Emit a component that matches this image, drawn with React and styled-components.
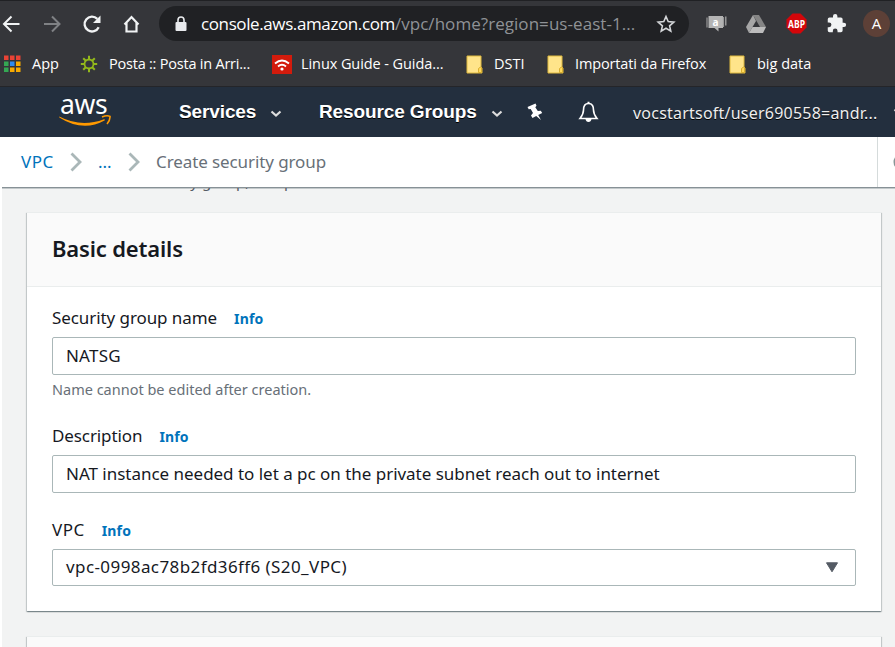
import React from "react";
import styled, { createGlobalStyle } from "styled-components";

const Global = createGlobalStyle`
  * { box-sizing: border-box; }
  body { margin: 0; background: #fff; overflow: hidden; }
`;

const ui = `"Open Sans", "Noto Sans", sans-serif`;
const ember = `"Noto Sans", "Open Sans", sans-serif`;

const Page = styled.div`
  width: 895px;
  height: 647px;
  overflow: hidden;
  display: flex;
  flex-direction: column;
  font-family: ${ember};
  color: #16191f;
`;

const Text = styled.span`
  font-size: ${(p) => p.$size || 17}px;
  letter-spacing: ${(p) => p.$track || 0}px;
  white-space: pre;
`;

const Chrome = styled.header`
  flex: none;
  height: 87px;
  background: #35363a;
  border-top: 1px solid #202124;
  border-bottom: 1px solid #242529;
  font-family: ${ui};
  color: #fff;
`;

const Toolbar = styled.div`
  height: 45px;
  display: flex;
  align-items: center;
`;

const NavIcons = styled.div`
  width: 159px;
  display: flex;
  gap: 16px;
  align-items: center;
  svg { flex: none; display: block; }
`;

const Omnibox = styled.div`
  width: 530px;
  height: 35px;
  border-radius: 18px;
  background: #202124;
  display: flex;
  align-items: center;
  padding: 0 13px 0 16px;
  svg { flex: none; }
`;

const Url = styled.div`
  flex: 1;
  margin-left: 14px;
  line-height: 24px;
  white-space: nowrap;
`;

const UrlPath = styled(Text)`
  color: #8f9296;
`;

const Extensions = styled.div`
  flex: 1;
  display: flex;
  align-items: center;
  padding-left: 16px;
  svg { flex: none; }
`;

const ExtSlot = styled.div`
  width: ${(p) => p.$w || 40}px;
  flex: none;
  display: flex;
`;

const Avatar = styled.div`
  flex: none;
  width: 27px;
  height: 27px;
  border-radius: 50%;
  background: #5d4037;
  font-size: 15px;
  line-height: 27px;
  text-align: center;
`;

const Bookmarks = styled.div`
  height: 36px;
  display: flex;
  align-items: center;
  padding-left: 3px;
`;

const Bookmark = styled.div`
  width: ${(p) => p.$w}px;
  flex: none;
  display: flex;
  align-items: center;
  line-height: 20px;
  svg { flex: none; margin-right: ${(p) => p.$gap}px; }
`;

const ConsoleNav = styled.nav`
  flex: none;
  height: 50px;
  background: #232f3e;
  display: flex;
  align-items: center;
  color: #fff;
  text-shadow: 0 1px 0 #000;
  svg { flex: none; }
`;

const AwsLogo = styled.div`
  flex: none;
  width: 179px;
  height: 50px;
  padding: 2px 0 0 59px;
  display: flex;
  flex-direction: column;
  text-shadow: none;
  svg { margin-top: -4px; }
`;

const LogoWord = styled.span`
  font-size: 26.5px;
  line-height: 30px;
  letter-spacing: -0.3px;
  padding-left: 1px;
`;

const NavItem = styled.div`
  width: ${(p) => p.$w}px;
  flex: none;
  display: flex;
  align-items: center;
  font: bold 19px/24px "Liberation Sans", sans-serif;
  letter-spacing: -0.12px;
  svg { margin: 3px 0 0 14px; }
`;

const Slot = styled.div`
  width: ${(p) => p.$w}px;
  flex: none;
  display: flex;
`;

const Account = styled.div`
  flex: none;
  width: 260px;
  padding-top: 1px;
  color: #eee;
  line-height: 22px;
`;

const CrumbBar = styled.div`
  flex: none;
  height: 50px;
  background: #fff;
  display: flex;
  align-items: center;
`;

const Crumbs = styled.div`
  width: 877px;
  flex: none;
  padding-left: 21px;
  display: flex;
  align-items: center;
  line-height: 24px;
  color: #687078;
  svg { flex: none; }
`;

const CrumbLink = styled(Text)`
  color: #0073bb;
`;

const HelpEdge = styled.div`
  flex: 1;
  height: 50px;
  border-left: 1px solid #d5dbdb;
  overflow: hidden;
  padding: 16px 0 0 15px;
  svg { display: block; }
`;

const Content = styled.main`
  flex: 1;
  min-height: 0;
  margin-left: 2px;
  padding: 0 14px 0 25px;
  background: #f2f3f3;
  border-top: 1px solid #879196;
  box-shadow: inset 0 1px 0 #c3c9cb;
  overflow: hidden;
`;

const Intro = styled.p`
  height: 24px;
  margin: 0;
  overflow: hidden;
  color: #545b64;
`;

const IntroLine = styled(Text)`
  display: block;
  margin-top: -19px;
  line-height: 24px;
`;

const Panel = styled.section`
  background: #fff;
  height: 399px;
  margin-bottom: 25px;
  border-top: 1px solid #eaeded;
  box-shadow: 0 1px 1px 0 rgba(0, 28, 36, 0.3), 1px 1px 1px 0 rgba(0, 28, 36, 0.15),
    -1px 1px 1px 0 rgba(0, 28, 36, 0.15);
`;

const PanelHeader = styled.div`
  height: 74px;
  background: #fafafa;
  border-bottom: 1px solid #eaeded;
  padding: 0 25px;
`;

const Title = styled.h2`
  margin: 0;
  font-size: 22px;
  font-weight: 600;
  line-height: 70px;
  letter-spacing: -0.16px;
`;

const PanelBody = styled.div`
  padding: 18px 25px 0;
`;

const Field = styled.div`
  height: ${(p) => p.$h}px;
`;

const LabelRow = styled.div`
  height: 32px;
  display: flex;
  align-items: baseline;
  gap: 17px;
  line-height: 26px;
`;

const Info = styled.a`
  font-size: 14px;
  font-weight: 700;
  letter-spacing: 0.15px;
  color: #0073bb;
`;

const Input = styled.div`
  height: ${(p) => p.$h || 38}px;
  border: 1px solid #aab7b8;
  border-radius: 2px;
  padding: 0 16px 0 13px;
  display: flex;
  align-items: center;
  justify-content: space-between;
  span { margin-bottom: 2px; }
`;

const Hint = styled.div`
  color: #687078;
  line-height: 28px;
`;

const Folder = () => (
  <svg width="17" height="19" viewBox="0 0 17 19">
    <path d="M1 1h14v11l1 1v5H1z" fill="#ffe48a" stroke="#dfb93f" />
    <path d="M12.5 17.5v-4l2-1.500 1 1v4.500z" fill="#ffd95c" stroke="#d9ae2f" />
  </svg>
);

const Caret = () => (
  <svg width="12" height="8" viewBox="0 0 12 8">
    <path d="M1.500 1.500 6 5.500l4.500-4" fill="none" stroke="#ddd" strokeWidth="2.200" />
  </svg>
);

const Chevron = () => (
  <svg width="12" height="20" viewBox="0 0 12 20">
    <path d="M1.500 1.500 10 10l-8.500 8.500" fill="none" stroke="#aab7b8" strokeWidth="2.800" />
  </svg>
);

const dots = ["#ea4335", "#ea4335", "#ea4335", "#34a853", "#2f8cf0", "#f9ab00", "#34a853", "#f9ab00", "#f9ab00"];

export default function App() {
  return (
    <Page>
      <Global />
      <Chrome>
        <Toolbar>
          <NavIcons>
            <svg width="24" height="24" viewBox="0 0 24 24" fill="none" stroke="#f1f3f4" strokeWidth="2">
              <path d="M19.500 12H4.500M11.500 4.500 4 12l7.500 7.500" />
            </svg>
            <svg width="24" height="24" viewBox="0 0 24 24" fill="none" stroke="#7f8184" strokeWidth="2">
              <path d="M4 12h15M12 4.500l7.500 7.500-7.500 7.500" />
            </svg>
            <svg width="24" height="24" viewBox="0 0 24 24">
              <path d="M18.700 15.200A7.400 7.400 0 1 1 17.300 6.900" fill="none" stroke="#f1f3f4" strokeWidth="2.300" />
              <path d="M20.500 3.500v7.500H13z" fill="#f1f3f4" />
            </svg>
            <svg width="24" height="24" viewBox="0 0 24 24" fill="none" stroke="#f1f3f4" strokeWidth="2.200">
              <path d="M6.500 11v8.500h10V11M4.500 12.500l7-7.500 7 7.500" />
            </svg>
          </NavIcons>
          <Omnibox>
            <svg width="12" height="16" viewBox="0 0 12 16">
              <rect x="0.500" y="6" width="11" height="9" rx="1" fill="#e8eaed" />
              <path d="M3 6V4a3 3 0 0 1 6 0v2" fill="none" stroke="#e8eaed" strokeWidth="1.600" />
            </svg>
            <Url>
              <Text $size={17} $track={-0.39}>console.aws.amazon.com</Text>
              <UrlPath $size={17} $track={0.05}>/vpc/home?region=us-east-1...</UrlPath>
            </Url>
            <svg width="20" height="20" viewBox="0 0 20 20">
              <path d="m10 2.500 2.200 5.100 5.600.5-4.200 3.700 1.200 5.400-4.800-2.900-4.800 2.900 1.200-5.400-4.200-3.700 5.600-.5z" fill="none" stroke="#d4d6d9" strokeWidth="1.600" />
            </svg>
          </Omnibox>
          <Extensions>
            <ExtSlot $w={41}>
              <svg width="23" height="18" viewBox="0 0 23 18">
                <path d="M3.500 1H18v12h-4.500v3.500L9.500 13h-6z" fill="#b4b4b4" />
                <path d="M2 2.500v10M18.500 2v10" stroke="#999" strokeWidth="1.200" />
                <path d="M20.800 1.500v9" stroke="#b0b0b0" strokeWidth="1.200" />
                <text x="7.500" y="10.500" fontFamily="Open Sans, sans-serif" fontWeight="700" fontSize="10" fill="#fff">a</text>
              </svg>
            </ExtSlot>
            <ExtSlot $w={40}>
              <svg width="20" height="18" viewBox="0 0 20 18">
                <path d="M7 0h6l7 12h-6z" fill="#858585" />
                <path d="M7 0 0 12l3 6 7-12z" fill="#a6a6a6" />
                <path d="M6.500 12H20l-3 6H3z" fill="#bcbcbc" />
              </svg>
            </ExtSlot>
            <ExtSlot $w={40}>
              <svg width="21" height="21" viewBox="0 0 21 21">
                <path d="M6.500.5h8l6 6v8l-6 6h-8l-6-6v-8z" fill="#d4060a" />
                <text x="2" y="14.500" textLength="17" lengthAdjust="spacingAndGlyphs" fontFamily="Open Sans, sans-serif" fontWeight="700" fontSize="11" fill="#fff">ABP</text>
              </svg>
            </ExtSlot>
            <ExtSlot $w={37}>
              <svg width="21" height="21" viewBox="0 0 24 24" fill="#f1f3f4">
                <path d="M20.500 11H19V7a2 2 0 0 0-2-2h-4V3.500a2.500 2.500 0 0 0-5 0V5H4a2 2 0 0 0-2 2v3.800h1.500a2.700 2.700 0 0 1 0 5.400H2V20a2 2 0 0 0 2 2h3.800v-1.500a2.700 2.700 0 0 1 5.400 0V22H17a2 2 0 0 0 2-2v-4h1.500a2.500 2.500 0 0 0 0-5" />
              </svg>
            </ExtSlot>
            <Avatar>A</Avatar>
          </Extensions>
        </Toolbar>
        <Bookmarks>
          <Bookmark $w={77} $gap={11}>
            <svg width="18" height="18" viewBox="0 0 18 18">
              {dots.map((c, i) => (
                <rect key={i} x={1 + (i % 3) * 6} y={Math.floor(i / 3) * 6 + 0.5} width="4.500" height="4.500" fill={c} />
              ))}
            </svg>
            <Text $size={14.5}>App</Text>
          </Bookmark>
          <Bookmark $w={192} $gap={11}>
            <svg width="18" height="18" viewBox="0 0 18 18">
              <circle cx="9" cy="9" r="4.500" fill="none" stroke="#93b81b" strokeWidth="1.800" />
              <g stroke="#93b81b" strokeWidth="2">
                {[0, 45, 90, 135, 180, 225, 270, 315].map((a) => (
                  <path key={a} d="M9 4.500V.8" transform={`rotate(${a} 9 9)`} />
                ))}
              </g>
            </svg>
            <Text $size={14.5} $track={-0.22}>Posta :: Posta in Arri...</Text>
          </Bookmark>
          <Bookmark $w={194} $gap={9}>
            <svg width="20" height="19" viewBox="0 0 20 19">
              <rect width="20" height="19" fill="#d31b0c" />
              <g fill="none" stroke="#fff" strokeWidth="1.800">
                <path d="M3 8.500q7-6 14 0M6 11.500q4-3.500 8 0" />
              </g>
              <circle cx="10" cy="14" r="1.600" fill="#fff" />
            </svg>
            <Text $size={14.5} $track={-0.08}>Linux Guide - Guida...</Text>
          </Bookmark>
          <Bookmark $w={81} $gap={11}>
            <Folder />
            <Text $size={14.5}>DSTI</Text>
          </Bookmark>
          <Bookmark $w={182} $gap={11}>
            <Folder />
            <Text $size={14.5} $track={-0.14}>Importati da Firefox</Text>
          </Bookmark>
          <Bookmark $w={90} $gap={11}>
            <Folder />
            <Text $size={14.5}>big data</Text>
          </Bookmark>
        </Bookmarks>
      </Chrome>
      <ConsoleNav>
        <AwsLogo>
          <LogoWord>aws</LogoWord>
          <svg width="52" height="13" viewBox="0 0 52 13">
            <path d="M.3 1.500Q22 13 45 4.200q1.500 0 .5 1.400Q24 17.500.3 2.500z" fill="#f90" />
            <path d="M43 2q5-2 8-.6.300 3.800-3 7.600" fill="none" stroke="#f90" strokeWidth="1.600" />
          </svg>
        </AwsLogo>
        <NavItem $w={140}>
          <span>Services</span>
          <Caret />
        </NavItem>
        <NavItem $w={208}>
          <span>Resource Groups</span>
          <Caret />
        </NavItem>
        <Slot $w={51}>
          <svg width="16" height="18" viewBox="0 0 16 18" fill="#fff">
            <path d="M.5 4 8.500.500l1 2.200-1.200 1.500 2.500 3.800 3-.3 1.400 2.300-4 2 2.800 5-4.800-4-3.700 2-1.500-2.500 2-2.500-2.300-4-2 .2z" />
          </svg>
        </Slot>
        <Slot $w={55}>
          <svg width="21" height="22" viewBox="0 0 21 22">
            <path d="M10.500 2.500c-4 0-5 3-5 6.500 0 4-1.500 6-3.500 8.500h17c-2-2.500-3.500-4.500-3.500-8.500 0-3.500-1-6.500-5-6.500z" fill="none" stroke="#fff" strokeWidth="1.600" />
            <path d="M9.500.8h2v2h-2zM7.500 18h6q-.5 3-3 3t-3-3" fill="#fff" />
          </svg>
        </Slot>
        <Account>
          <Text $size={16} $track={0.22}>vocstartsoft/user690558=andr...</Text>
        </Account>
        <Caret />
      </ConsoleNav>
      <CrumbBar>
        <Crumbs>
          <Slot $w={49}><CrumbLink $track={0.5}>VPC</CrumbLink></Slot>
          <Slot $w={28}><Chevron /></Slot>
          <Slot $w={30}><CrumbLink>...</CrumbLink></Slot>
          <Slot $w={28}><Chevron /></Slot>
          <Text $track={-0.1}>Create security group</Text>
        </Crumbs>
        <HelpEdge>
          <svg width="18" height="18" viewBox="0 0 18 18">
            <circle cx="9" cy="9" r="7.500" fill="none" stroke="#879596" strokeWidth="2" />
          </svg>
        </HelpEdge>
      </CrumbBar>
      <Content>
        <Intro>
          <IntroLine $size={15} $track={0.1}>To create a new security group, complete the fields below.</IntroLine>
        </Intro>
        <Panel>
          <PanelHeader>
            <Title>Basic details</Title>
          </PanelHeader>
          <PanelBody>
            <Field $h={118}>
              <LabelRow>
                <Text $track={-0.08}>Security group name</Text>
                <Info>Info</Info>
              </LabelRow>
              <Input><Text $track={0.2}>NATSG</Text></Input>
              <Hint><Text $size={14.5}>Name cannot be edited after creation.</Text></Hint>
            </Field>
            <Field $h={94}>
              <LabelRow>
                <Text $track={-0.1}>Description</Text>
                <Info>Info</Info>
              </LabelRow>
              <Input><Text $track={-0.025}>NAT instance needed to let a pc on the private subnet reach out to internet</Text></Input>
            </Field>
            <Field $h={80}>
              <LabelRow>
                <Text $track={0.5}>VPC</Text>
                <Info>Info</Info>
              </LabelRow>
              <Input $h={37}>
                <Text $track={0.41}>vpc-0998ac78b2fd36ff6 (S20_VPC)</Text>
                <svg width="14" height="11" viewBox="0 0 14 11">
                  <path d="M1.500.8h11L7 9.800z" fill="#545b64" stroke="#545b64" strokeLinejoin="round" />
                </svg>
              </Input>
            </Field>
          </PanelBody>
        </Panel>
        <Panel>
          <PanelHeader />
        </Panel>
      </Content>
    </Page>
  );
}
